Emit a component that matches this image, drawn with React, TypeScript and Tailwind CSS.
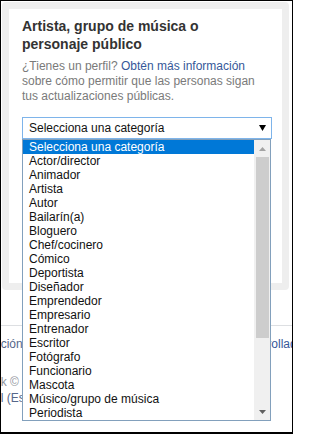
import React from 'react';

// Category options shown in the open dropdown
const categories = [
  'Selecciona una categoría',
  'Actor/director',
  'Animador',
  'Artista',
  'Autor',
  'Bailarín(a)',
  'Bloguero',
  'Chef/cocinero',
  'Cómico',
  'Deportista',
  'Diseñador',
  'Emprendedor',
  'Empresario',
  'Entrenador',
  'Escritor',
  'Fotógrafo',
  'Funcionario',
  'Mascota',
  'Músico/grupo de música',
  'Periodista',
];

function Triangle({ up = false, className }: { up?: boolean; className: string }) {
  return (
    <svg width="7" height="4" viewBox="0 0 7 4" className={className}>
      <polygon points={up ? '0,4 7,4 3.5,0' : '0,0 7,0 3.5,4'} fill="currentColor" />
    </svg>
  );
}

function Dropdown() {
  return (
    <div className="absolute left-[21px] top-[138px] w-[249px] h-[282px] border border-[#82a0bc] bg-white flex">
      <ul className="w-[231px]">
        {categories.map((c, i) => (
          <li
            key={c}
            className={
              i === 0
                ? 'h-[14px] leading-[14px] pl-[6px] text-[12px] bg-[#0078d7] text-white whitespace-nowrap'
                : 'h-[14px] leading-[14px] pl-[6px] text-[12px] text-[#111] whitespace-nowrap'
            }
          >
            {c}
          </li>
        ))}
      </ul>
      {/* scrollbar */}
      <div className="ml-auto w-[16px] bg-[#f0f0f0] flex flex-col items-center">
        <div className="h-[17px] flex items-center justify-center text-[#a3a3a3]">
          <Triangle up className="" />
        </div>
        <div className="w-[13px] h-[181px] bg-[#cdcdcd]" />
        <div className="flex-1" />
        <div className="h-[17px] flex items-center justify-center text-[#606060]">
          <Triangle className="" />
        </div>
      </div>
    </div>
  );
}

export default function App() {
  return (
    <div className="relative w-[293px] h-[434px] overflow-hidden bg-white border border-black border-b-2 font-['Liberation_Sans',Arial,sans-serif]">
      {/* Card */}
      <div className="mt-[1px] ml-[1px] w-[287px] h-[288px] border-[7px] border-[#eeeeee] rounded-[4px] bg-white pl-[13px] pt-[8px]">
        <h3 className="text-[14px] leading-[18px] font-bold text-[#333]">
          Artista, grupo de música o
          <br />
          personaje público
        </h3>
        <p className="mt-[6px] text-[12px] leading-[15px] text-[#7a7a7a] whitespace-nowrap">
          ¿Tienes un perfil? <span className="text-[#365899]">Obtén más información</span>
          <br />
          sobre cómo permitir que las personas sigan
          <br />
          tus actualizaciones públicas.
        </p>
        <div className="mt-[13px] w-[250px] h-[22px] border border-[#7eb4ea] flex items-center pl-[6px] pr-[5px] text-[12px] text-[#111]">
          <span>Selecciona una categoría</span>
          <svg width="7" height="6" viewBox="0 0 7 6" className="ml-auto">
            <polygon points="0,0 7,0 3.5,6" fill="#000" />
          </svg>
        </div>
      </div>

      {/* Footer */}
      <div className="mt-[35px] border-t border-[#dddfe2] text-[12px] leading-[16px] whitespace-nowrap">
        <div className="mt-[10px] flex">
          <span className="ml-[-41px] text-[#56678a]">Información</span>
          <span className="ml-auto mr-[-28px] text-[#365899]">Desarrolladores</span>
        </div>
        <div className="mt-[22px] ml-[-47px] text-[#90949c]">Facebook © 2017</div>
        <div className="ml-[-41px] text-[#56678a]">Español (España)</div>
      </div>

      <Dropdown />
    </div>
  );
}
